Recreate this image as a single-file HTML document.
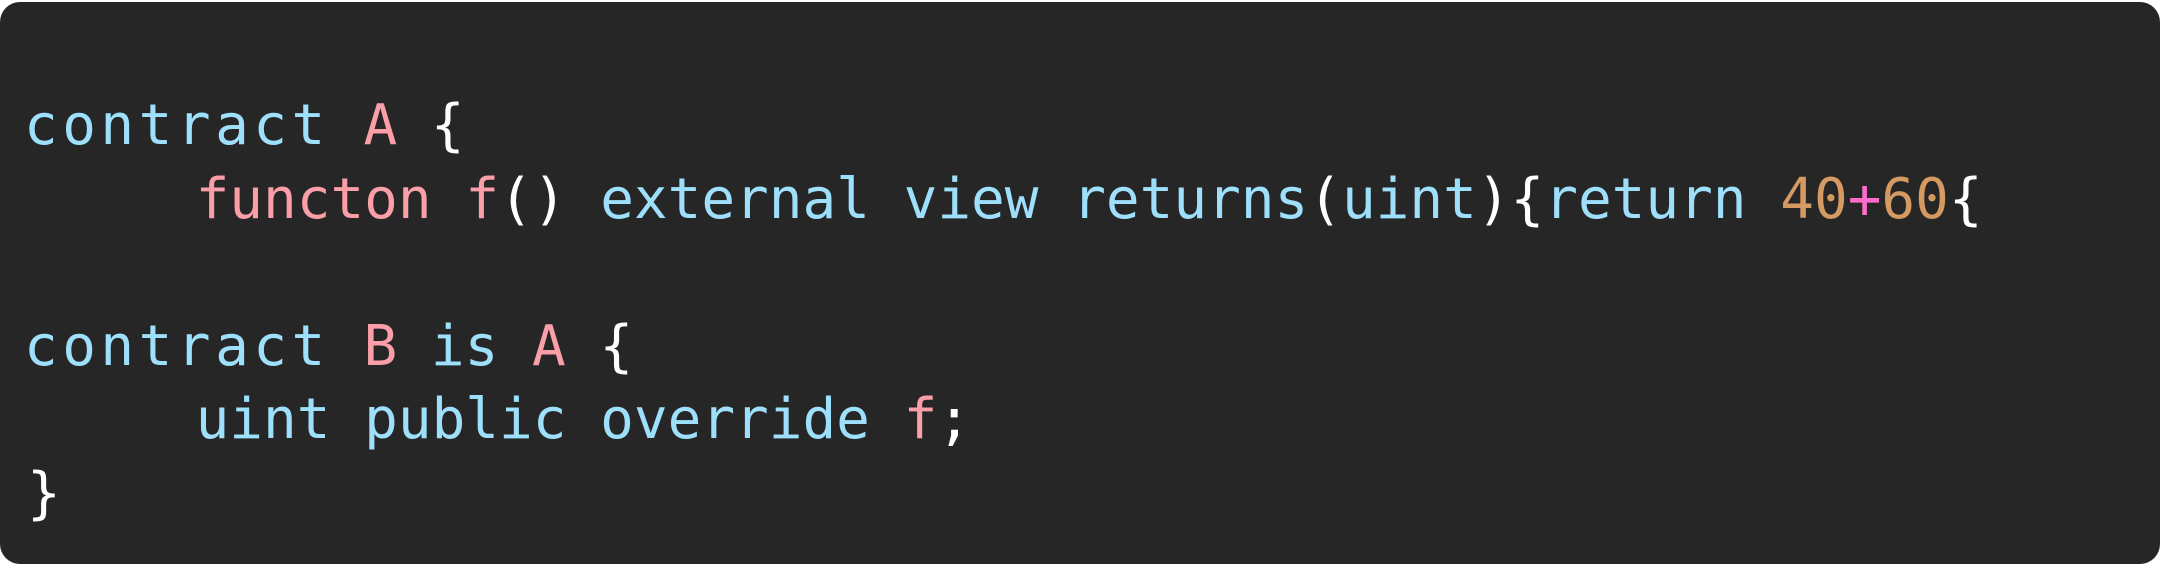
<!DOCTYPE html>
<html><head><meta charset="utf-8"><style>
html,body{margin:0;padding:0;background:#fff;width:2160px;height:564px;overflow:hidden}
.card{position:absolute;left:0;top:2px;width:2160px;height:562px;background:#262626;border-radius:20px}
pre{position:absolute;left:27px;top:89px;margin:0;font-family:"DejaVu Sans Mono","Liberation Mono",monospace;font-size:56px;line-height:73.5px;color:#fff}
.b{color:#9ee0fb}.p{color:#fa9ea8}.o{color:#d59a62}.m{color:#ff6ccb}
.c{letter-spacing:4.5px;margin-left:-3px}
</style></head><body><div class="card"></div>
<pre><span class="b c">contract</span> <span class="p">A</span> {
     <span class="p">functon</span> <span class="p">f</span>() <span class="b">external</span> <span class="b">view</span> <span class="b">returns</span>(<span class="b">uint</span>){<span class="b">return</span> <span class="o">40</span><span class="m">+</span><span class="o">60</span>{

<span class="b c">contract</span> <span class="p">B</span> <span class="b">is</span> <span class="p">A</span> {
     <span class="b">uint</span> <span class="b">public</span> <span class="b">override</span> <span class="p">f</span>;
}</pre>
</body></html>
